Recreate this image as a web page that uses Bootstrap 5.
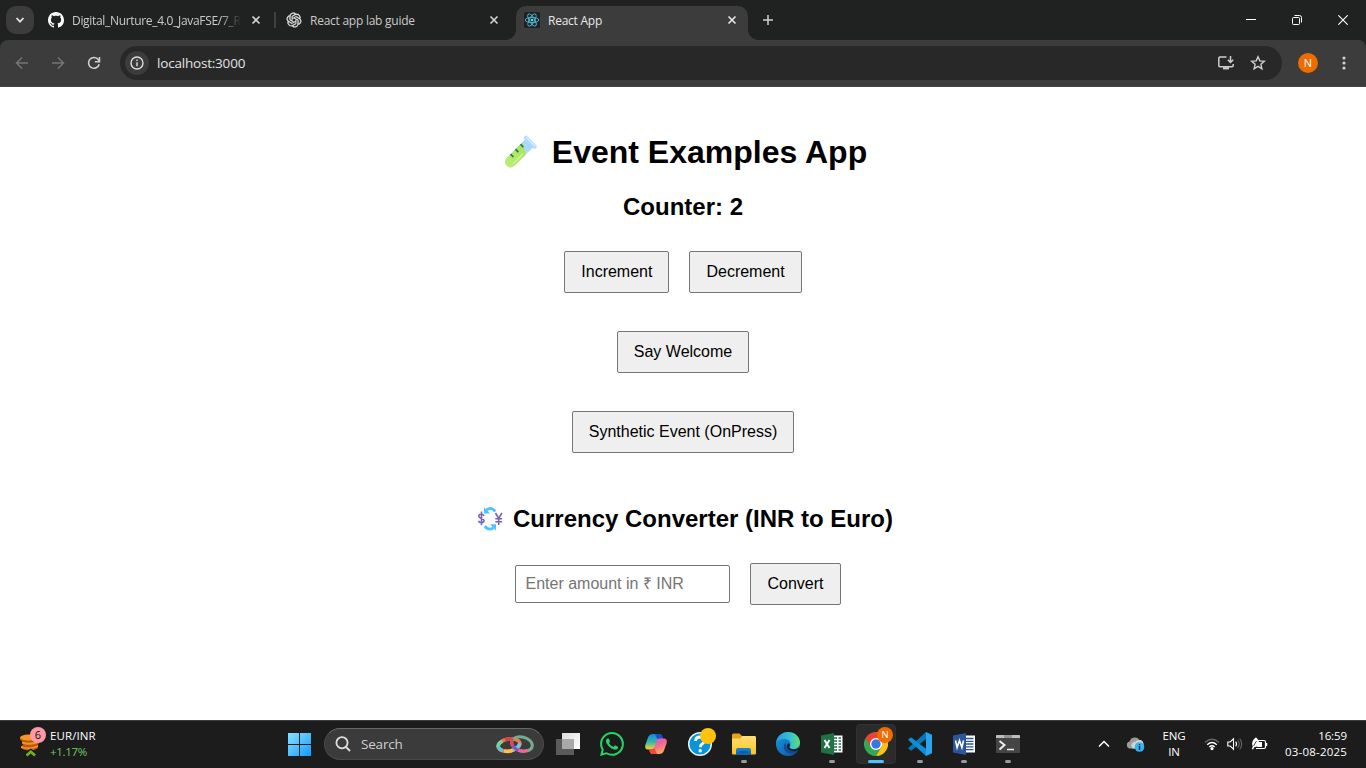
<!DOCTYPE html>
<html lang="en">
<head>
<meta charset="utf-8">
<meta name="viewport" content="width=device-width, initial-scale=1">
<title>React App</title>
<link href="https://cdn.jsdelivr.net/npm/bootstrap@5.3.0/dist/css/bootstrap.min.css" rel="stylesheet">
<style>
  body { height: 768px; overflow: hidden; background: #fff; font-family: "Open Sans", "Noto Sans", sans-serif; font-size: 12px; line-height: 16px; color: #fff; }
  svg { display: block; flex: none; }
  .tabstrip { height: 40px; background: #202221; }
  .tab-search { width: 28px; height: 28px; margin: 6px 6px 0; border-radius: 10px; background: #3c3c3c; }
  .browser-tab { width: 238px; height: 40px; padding-left: 8px; color: #c9cbca; letter-spacing: -.25px; }
  .tab-title { width: 168px; margin: 0 8px 0 8px; padding-top: 2px; white-space: nowrap; }
  .tab-title.fade-end { -webkit-mask-image: linear-gradient(90deg, #000 148px, transparent 169px); mask-image: linear-gradient(90deg, #000 148px, transparent 169px); letter-spacing: -.32px; }
  .tab-sep { width: 2px; height: 16px; margin-left: 10px; background: #3f4140; }
  .browser-tab.current { width: 232px; height: 34px; margin-top: 6px; padding-bottom: 6px; background: #3c3c3c; border-radius: 10px 10px 0 0; color: #e8e8e8; position: relative; }
  .browser-tab.current::before, .browser-tab.current::after { content: ""; position: absolute; bottom: 0; width: 10px; height: 10px; }
  .browser-tab.current::before { left: -10px; background: radial-gradient(circle at 0 0, transparent 9.5px, #3c3c3c 10px); }
  .browser-tab.current::after { right: -10px; background: radial-gradient(circle at 100% 0, transparent 9.5px, #3c3c3c 10px); }
  .new-tab { width: 40px; height: 40px; }
  .win-btn { width: 46px; height: 40px; }
  .toolbar-wrap { height: 47px; background: #202221; }
  .browser-bar { height: 47px; background: #3c3c3c; border-radius: 8px 8px 0 0; border-bottom: 1px solid #464646; }
  .nav-ico { width: 36px; height: 46px; }
  .omnibox { width: 1162px; height: 34px; border-radius: 17px; background: #282828; padding-left: 5px; font-size: 13.5px; letter-spacing: -.2px; color: #e3e3e3; }
  .site-info { width: 24px; height: 24px; border-radius: 50%; background: #3c3c3c; }
  .avatar { width: 20px; height: 20px; border-radius: 50%; background: #ef6c00; font-size: 11px; }

  .app { height: 633px; padding-top: 46px; font-family: "Liberation Sans", Arial, sans-serif; color: #000; }
  .app h1, .app h2 { margin: 0; font-weight: 700; white-space: nowrap; }
  .app h1 { height: 38px; font-size: 32px; line-height: 38px; }
  .app h2 { height: 28px; font-size: 24px; line-height: 28px; }
  .app .btn-plain { height: 42px; padding: 0 16px; margin: 0 10px; border: 1px solid #767676; border-radius: 2px; background: #efefef; color: #000; font-size: 16px; line-height: 38px; }
  .app .amount { width: 215px; height: 38px; padding: 0 9px; margin: 0 10px 0 0; border: 1px solid #767676; border-radius: 2px; font-size: 16px; color: #000; background: #fff; }
  .app .amount::placeholder { color: #757575; opacity: 1; }
  .gap-a { margin-top: 22px !important; } .gap-b { margin-top: 30px; } .gap-c { margin-top: 38px; } .gap-d { margin-top: 52px !important; }

  .taskbar { height: 48px; padding-bottom: 2px; background: #1c1c1c; border-top: 1px solid #3b3b3b; position: relative; }
  .widget { width: 286px; padding-left: 18px; line-height: 16px; font-size: 11.5px; }
  .widget-text { margin-left: 4px; padding-top: 1px; letter-spacing: .1px; }
  .gain { color: #6ccb5f; letter-spacing: -.3px; }
  .search-pill { width: 220px; height: 32px; margin: 0 2px 0 10px; border-radius: 16px; background: #3b3b3b; border: 1px solid #4a4a4a; border-top-color: #686868; color: #cfcfcf; font-size: 13.5px; padding: 0 8px 0 10px; letter-spacing: -.2px; }
  .search-label { margin-left: 10px; }
  .task { width: 44px; height: 45px; position: relative; }
  .task.running::after { content: ""; position: absolute; left: 19px; bottom: 3px; width: 6px; height: 3px; border-radius: 2px; background: #9a9a9a; }
  .task.front::before { content: ""; position: absolute; left: 2px; top: 3px; width: 40px; height: 40px; border-radius: 4px; background: #2b2b2b; border: 1px solid #313131; }
  .task.front::after { left: 14px; width: 16px; background: #4cc2ff; }
  .task svg { position: relative; }
  .pin { position: absolute; left: 23px; top: 6px; width: 16px; height: 16px; border-radius: 50%; background: #ef6c00; font-size: 9.5px; line-height: 16px; text-align: center; }
  .tray { font-size: 11.5px; letter-spacing: -.1px; }
  .lang { width: 40px; margin: 0 2px 0 8px; }
  .speaker { margin-left: 7px; }
  .clock { width: 72px; margin: 0 19px 0 7px; }
  .date { letter-spacing: .2px; }
</style>
</head>
<body>

<header>
  <div class="tabstrip d-flex">
    <div class="tab-search d-flex align-items-center justify-content-center">
      <svg width="10" height="8" viewBox="0 0 10 8"><path d="M1.5 2 5 5.7 8.5 2" fill="none" stroke="#e4e4e4" stroke-width="1.8"/></svg>
    </div>
    <div class="browser-tab d-flex align-items-center">
      <svg width="16" height="16" viewBox="0 0 16 16"><path fill="#fff" d="M8 0C3.58 0 0 3.58 0 8c0 3.54 2.29 6.53 5.47 7.59.4.07.55-.17.55-.38 0-.19-.01-.82-.01-1.49-2.01.37-2.53-.49-2.69-.94-.09-.23-.48-.94-.82-1.13-.28-.15-.68-.52-.01-.53.63-.01 1.08.58 1.23.82.72 1.21 1.87.87 2.33.66.07-.52.28-.87.51-1.07-1.78-.2-3.64-.89-3.64-3.95 0-.87.31-1.59.82-2.15-.08-.2-.36-1.02.08-2.12 0 0 .67-.21 2.2.82.64-.18 1.32-.27 2-.27s1.36.09 2 .27c1.53-1.04 2.2-.82 2.2-.82.44 1.1.16 1.92.08 2.12.51.56.82 1.27.82 2.15 0 3.07-1.87 3.75-3.65 3.95.29.25.54.73.54 1.48 0 1.07-.01 1.93-.01 2.2 0 .21.15.46.55.38A8.01 8.01 0 0 0 16 8c0-4.42-3.58-8-8-8"/></svg>
      <span class="tab-title fade-end">Digital_Nurture_4.0_JavaFSE/7_R</span>
      <svg width="16" height="16" viewBox="0 0 16 16"><path d="m4.5 4.500 7 7m0-7-7 7" stroke="#d5d5d5" stroke-width="1.6"/></svg>
      <span class="tab-sep"></span>
    </div>
    <div class="browser-tab d-flex align-items-center">
      <svg width="16" height="16" viewBox="-1 -1 26 26"><path fill="#e9ebea" stroke="#e9ebea" stroke-width=".5" d="M22.2819 9.8211a5.9847 5.9847 0 0 0-.5157-4.9108 6.0462 6.0462 0 0 0-6.5098-2.9A6.0651 6.0651 0 0 0 4.9807 4.1818a5.9847 5.9847 0 0 0-3.9977 2.9 6.0462 6.0462 0 0 0 .7427 7.0966 5.98 5.98 0 0 0 .511 4.9107 6.051 6.051 0 0 0 6.5146 2.9001A5.9847 5.9847 0 0 0 13.2599 24a6.0557 6.0557 0 0 0 5.7718-4.2058 5.9894 5.9894 0 0 0 3.9977-2.9001 6.0557 6.0557 0 0 0-.7475-7.0729zm-9.022 12.6081a4.4755 4.4755 0 0 1-2.8764-1.0408l.1419-.0804 4.7783-2.7582a.7948.7948 0 0 0 .3927-.6813v-6.7369l2.02 1.1686a.071.071 0 0 1 .038.052v5.5826a4.504 4.504 0 0 1-4.4945 4.4944zm-9.6607-4.1254a4.4708 4.4708 0 0 1-.5346-3.0137l.142.0852 4.783 2.7582a.7712.7712 0 0 0 .7806 0l5.8428-3.3685v2.3324a.0804.0804 0 0 1-.0332.0615L9.74 19.9502a4.4992 4.4992 0 0 1-6.1408-1.6464zM2.3408 7.8956a4.485 4.485 0 0 1 2.3655-1.9728V11.6a.7664.7664 0 0 0 .3879.6765l5.8144 3.3543-2.0201 1.1685a.0757.0757 0 0 1-.071 0l-4.8303-2.7865A4.504 4.504 0 0 1 2.3408 7.872zm16.5963 3.8558L13.1038 8.364 15.1192 7.2a.0757.0757 0 0 1 .071 0l4.8303 2.7913a4.4944 4.4944 0 0 1-.6765 8.1042v-5.6772a.79.79 0 0 0-.407-.667zm2.0107-3.0231l-.142-.0852-4.7735-2.7818a.7759.7759 0 0 0-.7854 0L9.409 9.2297V6.8974a.0662.0662 0 0 1 .0284-.0615l4.8303-2.7866a4.4992 4.4992 0 0 1 6.6802 4.66zM8.3065 12.863l-2.02-1.1638a.0804.0804 0 0 1-.038-.0567V6.0742a4.4992 4.4992 0 0 1 7.3757-3.4537l-.142.0805L8.704 5.459a.7948.7948 0 0 0-.3927.6813zm1.0976-2.3654l2.602-1.4998 2.6069 1.4998v2.9994l-2.5974 1.4997-2.6067-1.4997Z"/></svg>
      <span class="tab-title">React app lab guide</span>
      <svg width="16" height="16" viewBox="0 0 16 16"><path d="m4.500 4.500 7 7m0-7-7 7" stroke="#d5d5d5" stroke-width="1.6"/></svg>
    </div>
    <div class="browser-tab current d-flex align-items-center">
      <svg width="16" height="16" viewBox="0 0 16 16"><rect width="16" height="16" rx="1.5" fill="#212224"/><g fill="none" stroke="#53c1de" stroke-width=".9" transform="translate(8 8)"><ellipse rx="6.8" ry="2.6"/><ellipse rx="6.8" ry="2.6" transform="rotate(60)"/><ellipse rx="6.8" ry="2.6" transform="rotate(120)"/></g><circle cx="8" cy="8" r="1.3" fill="#61dafb"/></svg>
      <span class="tab-title">React App</span>
      <svg width="16" height="16" viewBox="0 0 16 16"><path d="m4.500 4.500 7 7m0-7-7 7" stroke="#e8e8e8" stroke-width="1.6"/></svg>
    </div>
    <div class="new-tab d-flex align-items-center justify-content-center">
      <svg width="12" height="12" viewBox="0 0 12 12"><path d="M6 1v10M1 6h10" stroke="#d0d0d0" stroke-width="1.5"/></svg>
    </div>
    <div class="d-flex ms-auto">
      <div class="win-btn d-flex align-items-center justify-content-center"><svg width="10" height="10"><path d="M0 4.500h10" stroke="#fff"/></svg></div>
      <div class="win-btn d-flex align-items-center justify-content-center"><svg width="10" height="10" fill="none" stroke="#fff"><rect x=".5" y="2.500" width="7" height="7" rx="1"/><path d="M2.500.5H7.500a2 2 0 0 1 2 2v5"/></svg></div>
      <div class="win-btn d-flex align-items-center justify-content-center"><svg width="10" height="10"><path d="m.3.3 9.400 9.400m0-9.400-9.400 9.400" stroke="#fff" stroke-width="1.1"/></svg></div>
    </div>
  </div>

  <div class="toolbar-wrap">
    <div class="browser-bar d-flex align-items-center">
      <div class="d-flex ps-1 pe-2">
        <div class="nav-ico d-flex align-items-center justify-content-center"><svg width="14" height="14" viewBox="0 0 14 14" fill="none" stroke="#747474" stroke-width="1.5"><path d="M13 7H2M7 1.500 1.500 7 7 12.500"/></svg></div>
        <div class="nav-ico d-flex align-items-center justify-content-center"><svg width="14" height="14" viewBox="0 0 14 14" fill="none" stroke="#747474" stroke-width="1.5"><path d="M1 7h11M7 1.500 12.500 7 7 12.500"/></svg></div>
        <div class="nav-ico d-flex align-items-center justify-content-center"><svg width="14" height="14" viewBox="0 0 14 14" fill="none" stroke="#cfcfcf" stroke-width="1.6"><path d="M12.200 8.200A5.400 5.400 0 1 1 11.400 3.800L12.700 5.400M12.500 1v4.700H7.900"/></svg></div>
      </div>
      <div class="omnibox d-flex align-items-center">
        <div class="site-info d-flex align-items-center justify-content-center"><svg width="14" height="14" viewBox="0 0 14 14" fill="none" stroke="#dcdcdc" stroke-width="1.400"><circle cx="7" cy="7" r="6"/><path d="M7 6.200v4M7 3.500v1.500"/></svg></div>
        <span class="ms-2">localhost:3000</span>
        <div class="d-flex ms-auto gap-3 pe-3 align-items-center">
          <svg width="16" height="16" viewBox="0 0 16 16" fill="none" stroke="#cfcfcf" stroke-width="1.500"><path d="M8.500 2H2Q.8 2 .8 3.200v7.300q0 1.200 1.200 1.200h12q1.200 0 1.200-1.200V9M12.500 1v6M9.800 4.800l2.700 2.700 2.700-2.700"/><path d="M5 13.300h6" stroke-width="2.200"/></svg>
          <svg width="16" height="16" viewBox="0 0 16 16" fill="none" stroke="#cfcfcf" stroke-width="1.400"><path d="m8 1.800 1.800 4.100 4.500.4-3.400 3 1 4.400L8 11.400l-3.900 2.300 1-4.400-3.400-3 4.500-.4z"/></svg>
        </div>
      </div>
      <div class="avatar d-flex align-items-center justify-content-center ms-3">N</div>
      <svg class="ms-4" width="4" height="14" viewBox="0 0 4 14" fill="#d0d0d0"><circle cx="2" cy="2" r="1.600"/><circle cx="2" cy="7" r="1.600"/><circle cx="2" cy="12" r="1.600"/></svg>
    </div>
  </div>
</header>

<main class="app">
  <h1 class="d-flex justify-content-center">
    <svg width="53" height="38" viewBox="0 0 53 38">
      <defs>
        <linearGradient id="glass" x1="0" x2="0" y1="0" y2="1"><stop stop-color="#a5d4fb"/><stop offset="1" stop-color="#cfeaff"/></linearGradient>
        <linearGradient id="liquid" x1="0" x2="0" y1="0" y2="1"><stop stop-color="#a5e455"/><stop offset="1" stop-color="#bdec74"/></linearGradient>
      </defs>
      <g transform="translate(31 9.500) rotate(45)">
        <path d="M-5.500 0h11v27.500a5.500 5.500 0 0 1-11 0z" fill="url(#glass)"/>
        <path d="m-5.500 5 11 6.500v16a5.500 5.500 0 0 1-11 0z" fill="url(#liquid)"/>
        <path d="M3 13v14" stroke="#d0f49a" stroke-width="1.500"/>
        <path d="M-5.500 8h4m-4 7h4m-4 7h4" stroke="#16746b" stroke-width="1.700"/>
        <rect x="-8.300" y="-2.500" width="16.600" height="4.200" rx="2" fill="#b5dcff"/>
        <path d="M-6.500-1.200h13" stroke="#e2f3ff" stroke-width="1"/>
      </g>
    </svg>
    <span>Event Examples App</span>
  </h1>
  <h2 class="gap-a text-center">Counter: 2</h2>
  <div class="gap-b d-flex justify-content-center">
    <button class="btn-plain">Increment</button>
    <button class="btn-plain">Decrement</button>
  </div>
  <div class="gap-c d-flex justify-content-center"><button class="btn-plain">Say Welcome</button></div>
  <div class="gap-c d-flex justify-content-center"><button class="btn-plain">Synthetic Event (OnPress)</button></div>
  <h2 class="gap-d d-flex justify-content-center">
    <svg width="40" height="28" viewBox="0 0 40 28" fill="none">
      <g stroke="#4cc2ff" stroke-width="2.800"><path d="M13.500 4.800q5-3.200 8.700 1.700"/><path d="M20.500 22.900q-5 3.200-8.700-1.700"/></g>
      <path d="M11 2.200v6.300h6zM23 25.500v-6.300h-6z" fill="#4cc2ff"/>
      <g stroke="#7a63b5" stroke-width="1.600"><path d="M11 10.800Q10.200 9.300 8.300 9.300q-2.500.1-2.500 2c0 2.600 5.300 1.700 5.300 4.200q0 2-2.700 2.100-2.300 0-3-1.700M8.500 6.500v13.800"/><path d="m22.500 8 3.200 5.500L28.900 8M25.700 13.300V20M22.300 13.800h6.800M22.300 16.700h6.800"/></g>
    </svg>
    <span>Currency Converter (INR to Euro)</span>
  </h2>
  <div class="gap-b d-flex justify-content-center align-items-center">
    <input class="amount" type="text" placeholder="Enter amount in ₹ INR">
    <button class="btn-plain">Convert</button>
  </div>
</main>

<footer class="taskbar d-flex align-items-center">
  <div class="widget d-flex align-items-center">
    <svg width="28" height="34" viewBox="0 0 28 34">
      <g fill="#b95b0c"><ellipse cx="10.500" cy="12" rx="8.500" ry="3.500"/><ellipse cx="12.500" cy="16" rx="8.500" ry="3.500"/><ellipse cx="11.500" cy="20" rx="8.500" ry="3.500"/></g>
      <g fill="#f79625"><ellipse cx="10.500" cy="10.500" rx="8.500" ry="3"/><path d="M4 14.500q8 3 17-1v2q-8 4-17 1zM3 19q8 3.500 17-1v2q-8 3.500-17 1z"/></g>
      <path d="m8.500 28.500 4.300-3.700 4.300 3.700" fill="none" stroke="#1c1c1c" stroke-width="5"/><path d="m8.500 28.500 4.300-3.700 4.300 3.700" fill="none" stroke="#73b518" stroke-width="2.600"/>
      <circle cx="20" cy="8" r="8" fill="#ff99a4"/><text x="20" y="12" text-anchor="middle" font-size="11" fill="#111">6</text>
    </svg>
    <div class="widget-text"><div>EUR/INR</div><div class="gain">+1.17%</div></div>
  </div>
  <svg class="ms-0" width="28" height="24" viewBox="0 0 28 24">
    <defs><linearGradient id="win" gradientUnits="userSpaceOnUse" x1="2" y1="0" x2="25" y2="24"><stop stop-color="#8be3ff"/><stop offset="1" stop-color="#139bff"/></linearGradient></defs>
    <path fill="url(#win)" d="M2 1h11v11H2zM14 1h11v11H14zM2 13h11v11H2zM14 13h11v11H14z"/>
  </svg>
  <div class="search-pill d-flex align-items-center">
    <svg width="16" height="16" viewBox="0 0 16 16" fill="none" stroke="#dedede" stroke-width="1.800"><circle cx="7" cy="6.700" r="5.600"/><path d="m11 11 4 4"/></svg>
    <span class="search-label">Search</span>
    <svg class="ms-auto" width="40" height="24" viewBox="0 0 40 24" fill="none">
      <g transform="rotate(-10 14 13)" stroke-width="3.600"><ellipse cx="14" cy="13" rx="11" ry="6" stroke="#f0784a"/><path d="M3 13a11 6 0 0 1 5-5" stroke="#6fd5a0"/><path d="M8 18q5 2 9 .7" stroke="#ffc04a"/><path d="M17 18.700q6-1 8-5.500" stroke="#6bc7e8"/><path d="M3 13q1 3 4 4.700" stroke="#5cc6d9"/><path d="M11 7.300q5-1 9 .8" stroke="#c9484a"/></g>
      <g transform="rotate(14 27 12)" stroke-width="3"><ellipse cx="27" cy="12" rx="10.500" ry="7" stroke="#72ad91"/><path d="M18 15.500q4 4 9 3.500" stroke="#8a50c4"/><path d="M25 19q6 .4 9-2.500" stroke="#f46499"/><path d="M17 9q-2 3 1 6.500" stroke="#e7445c"/></g>
    </svg>
  </div>
  <div class="task d-flex align-items-center justify-content-center"><svg width="24" height="24" viewBox="0 0 24 24"><defs><linearGradient id="pane" x2="1" y2="1"><stop stop-color="#ddd"/><stop offset="1" stop-color="#fff"/></linearGradient></defs><path fill="url(#pane)" d="M6 1h18v16H6z"/><path fill="#5b5b5b" d="M0 7h18v16H0z"/><path fill="#a9a9a9" d="M6 7h12v10H6z"/></svg></div>
  <div class="task d-flex align-items-center justify-content-center"><svg width="24" height="24" viewBox="0 0 16 16"><path fill="#25d366" d="M13.601 2.326A7.85 7.85 0 0 0 7.994 0C3.627 0 .068 3.558.064 7.926c0 1.399.366 2.760 1.057 3.965L0 16l4.204-1.102a7.900 7.900 0 0 0 3.790.965h.004c4.368 0 7.926-3.558 7.930-7.930A7.900 7.900 0 0 0 13.600 2.326zM7.994 14.521a6.600 6.600 0 0 1-3.356-.920l-.240-.144-2.494.654.666-2.433-.156-.251a6.560 6.560 0 0 1-1.007-3.505c0-3.626 2.957-6.584 6.591-6.584a6.560 6.560 0 0 1 4.660 1.931 6.560 6.560 0 0 1 1.928 4.660c-.004 3.639-2.961 6.592-6.592 6.592m3.615-4.934c-.197-.099-1.170-.578-1.353-.646-.182-.065-.315-.099-.445.099-.133.197-.513.646-.627.775-.114.133-.232.148-.430.050-.197-.100-.836-.308-1.592-.985-.590-.525-.985-1.175-1.103-1.372-.114-.198-.011-.304.088-.403.087-.088.197-.232.296-.346.100-.114.133-.198.198-.330.065-.134.034-.248-.015-.347-.050-.099-.445-1.076-.612-1.470-.160-.389-.323-.335-.445-.340-.114-.007-.247-.007-.380-.007a.730.730 0 0 0-.529.247c-.182.198-.691.677-.691 1.654s.710 1.916.810 2.049c.098.133 1.394 2.132 3.383 2.992.470.205.840.326 1.129.418.475.152.904.129 1.246.080.380-.058 1.171-.480 1.338-.943.164-.464.164-.860.114-.943-.049-.084-.182-.133-.380-.232"/></svg></div>
  <div class="task d-flex align-items-center justify-content-center"><svg width="24" height="24" viewBox="0 0 24 24">
    <defs>
      <linearGradient id="cpa" x2="0" y2="1"><stop stop-color="#1785e8"/><stop offset=".5" stop-color="#35b6a2"/><stop offset="1" stop-color="#f0d63a"/></linearGradient>
      <linearGradient id="cpb" x2=".5" y2="1"><stop stop-color="#a86be8"/><stop offset=".5" stop-color="#f4629a"/><stop offset="1" stop-color="#ffa45e"/></linearGradient>
    </defs>
    <path d="M9 2h6.500q2 0 2.700 2.500L19 7h-3q-2 0-2.600 2l-2 6.500q-.6 2-2.400 2H4Q.5 17.500 1.300 13L4 5.500Q5.200 2 9 2z" fill="url(#cpa)"/>
    <path d="M11 2h4.500q2 0 2.700 2.500L19 7h-3q-1.700 0-2.300 1z" fill="#1b4fc4"/>
    <path d="M15 22H8.500q-2 0-2.700-2.500L5 17h3q2 0 2.600-2l2-6.500q.6-2 2.400-2h5q3.500 0 2.700 4.500L20 18.500Q18.800 22 15 22z" fill="url(#cpb)"/>
    <path d="M13 22H8.500q-2 0-2.700-2.500L5 17h3q1.700 0 2.300-1z" fill="#ee4b38"/>
  </svg></div>
  <div class="task d-flex align-items-center justify-content-center"><svg width="32" height="32" viewBox="0 0 32 32"><circle cx="16" cy="16" r="11.300" fill="#0a95d8" stroke="#e8f5fb" stroke-width="1.500"/><path d="M11.500 13q.3-4 4.500-4 4.300.2 4.300 3.700 0 2-2.200 3.300-1.800 1-1.800 3.200" fill="none" stroke="#fff" stroke-width="2.800"/><circle cx="16.200" cy="22.800" r="1.700" fill="#fff"/><circle cx="24" cy="8" r="8" fill="#ffc20e"/></svg></div>
  <div class="task running d-flex align-items-center justify-content-center"><svg width="24" height="24" viewBox="0 0 24 24"><defs><linearGradient id="fold" x2="0" y2="1"><stop stop-color="#ffde7a"/><stop offset="1" stop-color="#fcc419"/></linearGradient><linearGradient id="tray" x2="0" y2="1"><stop stop-color="#168ad8"/><stop offset="1" stop-color="#0d5fb0"/></linearGradient></defs><path d="M0 3q0-1.500 1.500-1.500h6L10 4h12.500Q24 4 24 5.500V12H0z" fill="#e8a317"/><path d="M0 6.500h8L10.500 4h12Q24 4 24 5.500v16q0 1-1 1H1q-1 0-1-1z" fill="url(#fold)"/><path d="M4 23v-5q0-2 2-2h11q2 0 2 2v5z" fill="url(#tray)"/><path d="M7.500 20h8" stroke="#084f91" stroke-width="1.300"/></svg></div>
  <div class="task d-flex align-items-center justify-content-center"><svg width="24" height="24" viewBox="0 0 24 24">
    <defs><linearGradient id="eda" x1="0" x2="1"><stop stop-color="#259be4"/><stop offset=".6" stop-color="#35c1d4"/><stop offset="1" stop-color="#62df68"/></linearGradient><linearGradient id="edb" x2="1" y2="1"><stop stop-color="#1a9ae0"/><stop offset="1" stop-color="#0c4fa3"/></linearGradient></defs>
    <circle cx="12" cy="12" r="12" fill="url(#edb)"/>
    <path d="M.2 10.500C1 4.500 6 0 12 0c7 0 12 5 12 10.500 0 4-3 6.500-6.500 6.500-3 0-4.500-1.200-4-2.200.8-1 1.200-2 1-3.300C14.200 8.500 11.500 7 8.500 7 5 7 1.500 8.500.2 10.500z" fill="url(#eda)"/>
    <path d="M9.500 10.500c-3.500 4-1 9.500 3.500 11 4 1 7.500-.5 9.700-3.500-3 1.500-7.500 1.200-10-1-2-1.800-3.200-4-3.200-6.500z" fill="#114a91"/>
    <path d="M13.500 14.800c-.5 1.500 1.500 2.600 4 2.600 2.400 0 4-.8 5.500-2l.5 1.600q-.5 1.500-1 1.500c-4 1.500-8.500.5-10.500-2-1.300-1.800-1.200-4 .2-5 1.400 0 2.300 1.500 1.300 3.300z" fill="#1c1c1c"/>
  </svg></div>
  <div class="task running d-flex align-items-center justify-content-center"><svg width="24" height="24" viewBox="0 0 24 24"><path d="M12 3.500h10.500v17H12z" fill="#fff"/><path d="M14 6h3m1.500 0H21M14 9h3m1.500 0H21M14 12h3m1.500 0H21M14 15h3m1.500 0H21M14 18h3m1.500 0H21" stroke="#207245" stroke-width="1.700"/><path d="m1 3.500 13-2.500v22L1 20.500z" fill="#1f7244"/><path d="m4.500 8 5 8m0-8-5 8" stroke="#fff" stroke-width="1.900"/></svg></div>
  <div class="task running front d-flex align-items-center justify-content-center"><svg width="24" height="24" viewBox="0 0 24 24"><path d="M12 12 1.600 6A12 12 0 0 1 22.400 6z" fill="#ea4335"/><path d="M12 12 1.600 6A12 12 0 0 0 12 24l5.200-9z" fill="#34a853"/><path d="M12 6h10.400A12 12 0 0 1 12 24l5.200-9z" fill="#fbc116"/><path d="M1.600 6 6.800 15 12 6z" fill="#ea4335"/><circle cx="12" cy="12" r="6" fill="#fff"/><circle cx="12" cy="12" r="4.700" fill="#3478e5"/></svg><span class="pin">N</span></div>
  <div class="task running d-flex align-items-center justify-content-center"><svg width="24" height="24" viewBox="0 0 24 24"><path d="m18 0 6 2.800v18.400L18 24z" fill="#2aa4ef"/><path d="M18 0v7.200L3 18.700 0 16.200z" fill="#0877b9"/><path d="M18 24v-7.200L3 5.300 0 7.800z" fill="#118dd6"/></svg></div>
  <div class="task running d-flex align-items-center justify-content-center"><svg width="24" height="24" viewBox="0 0 24 24"><path d="M12 3.500h11v17H12z" fill="#fff"/><path d="M14 6.500h7.500M14 9.300h7.500M14 12h7.500M14 14.800h7.500M14 17.600h7.500" stroke="#2b579a" stroke-width="1.300"/><path d="m1 3.500 13-2.500v22L1 20.500z" fill="#2b579a"/><path d="m3.500 8.500 1.600 7 2.400-7 2.400 7 1.600-7" fill="none" stroke="#fff" stroke-width="1.600"/></svg></div>
  <div class="task running d-flex align-items-center justify-content-center"><svg width="24" height="20" viewBox="0 0 24 20"><rect y="1" width="24" height="18" rx="1" fill="#454545"/><path d="M0 4V2q0-1 1-1h22q1 0 1 1v2z" fill="#bdbdbd"/><path d="M8 1h8v3H8z" fill="#929292"/><path d="m3.500 7 5 4-5 4.500" fill="none" stroke="#eee" stroke-width="2"/><path d="M11 15.500h7" stroke="#eee" stroke-width="1.500"/></svg></div>

  <div class="tray d-flex align-items-center ms-auto">
    <svg width="12" height="8" viewBox="0 0 12 8"><path d="m1 6.500 5-5 5 5" fill="none" stroke="#fff" stroke-width="1.500"/></svg>
    <svg class="ms-3" width="20" height="16" viewBox="0 0 20 16"><path d="M4 12.500a3.500 3.500 0 0 1-.4-6.900A5.500 5.500 0 0 1 13.500 4a4.300 4.300 0 0 1 .5 8.500z" fill="#9b9b9b"/><path d="M6.500 12.500a4 4 0 0 1 3-6.800q1.500-2 4-1.700a4.300 4.300 0 0 1 .5 8.500z" fill="#d2d2d2"/><circle cx="13.500" cy="11" r="4.800" fill="#35b3ef"/><path d="M13.500 10v4m0-6v1.200" stroke="#173a52" stroke-width="1.400"/></svg>
    <div class="lang text-center">ENG<br>IN</div>
    <svg class="ms-2" width="16" height="14" viewBox="0 0 16 14" fill="none" stroke="#fff" stroke-width="1.300"><path d="M1 5.500q7-6.500 14 0" stroke="#666"/><path d="M3.200 7.700q4.800-4.400 9.600 0M5.300 9.900q2.700-2.400 5.400 0"/><circle cx="8" cy="11.600" r="1" fill="#fff"/></svg>
    <svg class="speaker" width="16" height="14" viewBox="0 0 16 14" fill="none" stroke="#fff" stroke-width="1.100"><path d="M.8 5h2.400L6.500 1.800v10.400L3.200 9H.8z"/><path d="M8.700 4.700q1.700 2.300 0 4.600"/><path d="M10.700 3q3 4 0 8M12.700 1.500q4 5.500 0 11" stroke="#666"/></svg>
    <svg class="ms-2" width="17" height="14" viewBox="0 0 17 14"><path d="M7 3.500h6q1.500 0 1.500 1.500v5q0 1.500-1.500 1.500H5" fill="none" stroke="#fff" stroke-width="1.200"/><path d="M7 5h4v5H6z" fill="#fff"/><path d="M15.500 6v3" stroke="#fff" stroke-width="1.500"/><path d="M5 .3Q8.500 3.500 8 6.500 7.300 9.700 3.500 10L2 12.500.8 12l1-2.500Q-.5 4.500 5 .3z" fill="#fff"/><path d="M5.500 4 2.500 9" stroke="#1c1c1c" stroke-width=".8"/></svg>
    <div class="clock text-end text-nowrap">16:59<br><span class="date">03-08-2025</span></div>
  </div>
</footer>

<script src="https://cdn.jsdelivr.net/npm/bootstrap@5.3.0/dist/js/bootstrap.bundle.min.js"></script>
</body>
</html>
